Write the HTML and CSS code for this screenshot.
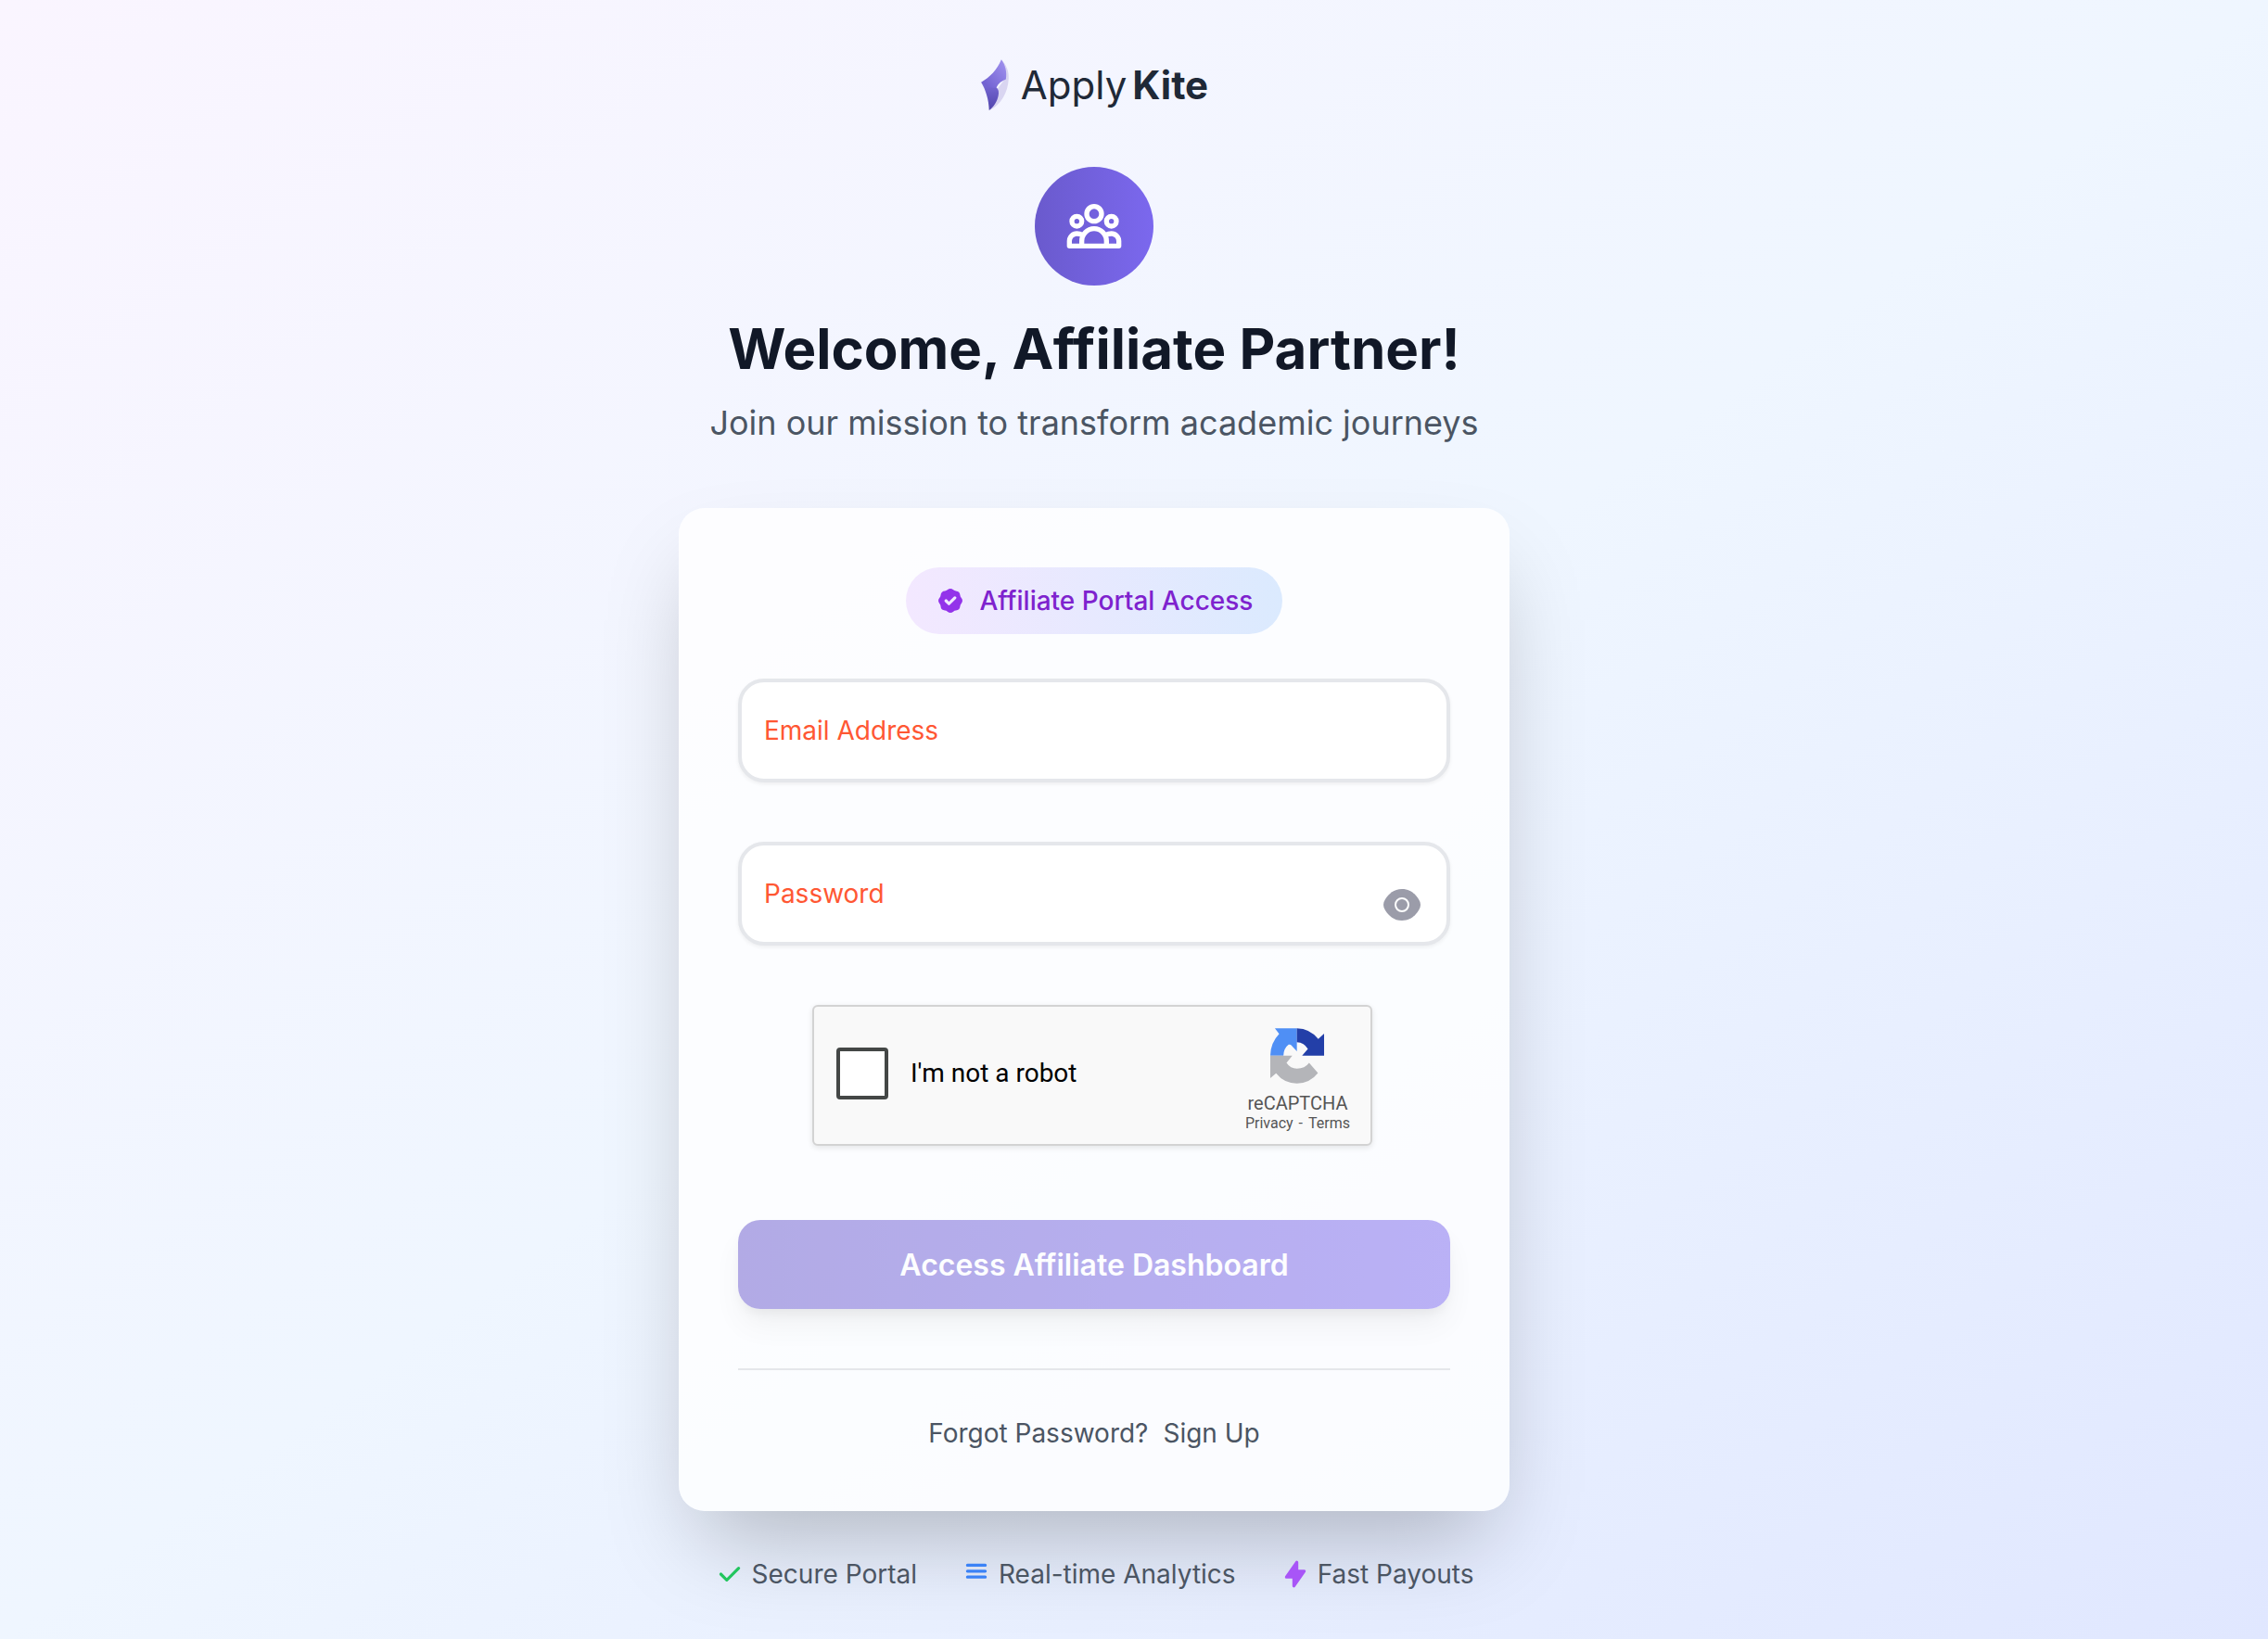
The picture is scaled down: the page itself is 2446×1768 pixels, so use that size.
FILE: index.html
```
<!DOCTYPE html>
<html lang="en">
<head>
    <meta charset="UTF-8">
    <meta name="viewport" content="width=device-width, initial-scale=1.0">
    <title>Apply Kite - Affiliate Portal</title>
    <link rel="stylesheet" href="styles.css">
</head>
<body>
    <main class="page">
        <header class="intro">
            <a class="logo" href="index.html">
                <svg class="logo-mark" viewBox="48 42 96 170" aria-hidden="true">
                    <defs>
                        <linearGradient id="kiteTop" x1="0" y1="1" x2="1" y2="0">
                            <stop offset="0" stop-color="#6a5acd"/>
                            <stop offset="1" stop-color="#a394f0"/>
                        </linearGradient>
                        <linearGradient id="kiteBottom" x1="0" y1="0" x2="0" y2="1">
                            <stop offset="0" stop-color="#7a6bd6"/>
                            <stop offset="1" stop-color="#5044ac"/>
                        </linearGradient>
                    </defs>
                    <path fill="#d9d5f1" d="M117 43C134 60 142 82 141 104C139 150 116 190 78 209L96 150L130 104Z"/>
                    <path fill="url(#kiteBottom)" d="M51 117L101 134C108 140 110 150 107 162C103 180 93 198 77 209C76 174 66 142 51 117Z"/>
                    <path fill="url(#kiteTop)" d="M117 43C130 60 136 84 132 107C119 112 107 120 101 134C84 138 66 132 51 117C79 101 103 77 117 43Z"/>
                </svg>
                <span class="logo-text"><span>Apply</span> <strong>Kite</strong></span>
            </a>

            <div class="avatar">
                <svg viewBox="0 0 192 192" aria-hidden="true">
                    <circle cx="96" cy="56" r="24"/>
                    <circle cx="40" cy="80" r="16"/>
                    <circle cx="152" cy="80" r="16"/>
                    <path d="M56 160v-16a40 40 0 0 1 80 0v16"/>
                    <path d="M58 124Q50 120 40 120a24 24 0 0 0-24 24v16h160v-16a24 24 0 0 0-24-24q-10 0-18 4"/>
                </svg>
            </div>

            <h1 class="title">Welcome, Affiliate Partner!</h1>
            <p class="subtitle">Join our mission to transform academic journeys</p>
        </header>

        <form class="card">
            <div class="badge">
                <svg viewBox="0 0 20 20" fill="currentColor" aria-hidden="true">
                    <path fill-rule="evenodd" clip-rule="evenodd" d="M6.267 3.455a3.066 3.066 0 001.745-.723 3.066 3.066 0 013.976 0 3.066 3.066 0 001.745.723 3.066 3.066 0 012.812 2.812c.051.643.304 1.254.723 1.745a3.066 3.066 0 010 3.976 3.066 3.066 0 00-.723 1.745 3.066 3.066 0 01-2.812 2.812 3.066 3.066 0 00-1.745.723 3.066 3.066 0 01-3.976 0 3.066 3.066 0 00-1.745-.723 3.066 3.066 0 01-2.812-2.812 3.066 3.066 0 00-.723-1.745 3.066 3.066 0 010-3.976 3.066 3.066 0 00.723-1.745 3.066 3.066 0 012.812-2.812zm7.44 5.252a1 1 0 00-1.414-1.414L9 10.586 7.707 9.293a1 1 0 00-1.414 1.414l2 2a1 1 0 001.414 0l4-4z"/>
                </svg>
                <span>Affiliate Portal Access</span>
            </div>

            <div class="field">
                <input type="email" id="email" autocomplete="off">
                <label for="email">Email Address</label>
            </div>

            <div class="field">
                <input type="password" id="password" autocomplete="off">
                <label for="password">Password</label>
                <button class="toggle" type="button" aria-label="Show password">
                    <svg viewBox="0 0 40 34" aria-hidden="true">
                        <path fill="#9b9ca9" d="M20 0C29 0 34 5 38 11Q42 17 38 23C34 29 29 34 20 34S6 29 2 23Q-2 17 2 11C6 5 11 0 20 0Z"/>
                        <circle cx="20" cy="17" r="7" fill="none" stroke="#fff" stroke-width="2"/>
                    </svg>
                </button>
            </div>

            <div class="captcha">
                <input type="checkbox" id="robot">
                <label for="robot">I'm not a robot</label>
                <div class="captcha-brand">
                    <svg viewBox="210 112 182 186" aria-hidden="true">
                        <path fill="#4f8ff5" d="M300 115H228L242 133Q214 162 213 204H256Q257 180 273 168Q279 166 283 172L300 190Z"/>
                        <path fill="#233fa8" d="M300 115Q343 116 370 150L389 132V204H317L336 182Q324 161 300 160Z"/>
                        <path fill="#b4b5b9" d="M213 204H285L266 228Q279 247 300 247Q326 247 340 228L369 261Q342 295 300 295Q258 295 232 262L213 278Z"/>
                    </svg>
                    <span class="captcha-name">reCAPTCHA</span>
                    <span class="captcha-links"><a href="#">Privacy</a><span>-</span><a href="#">Terms</a></span>
                </div>
            </div>

            <button class="submit" type="submit" disabled>Access Affiliate Dashboard</button>

            <div class="links">
                <a href="#">Forgot Password?</a>
                <a href="#">Sign Up</a>
            </div>
        </form>

        <ul class="features">
            <li>
                <svg class="green" viewBox="0 0 20 20" fill="currentColor" aria-hidden="true">
                    <path fill-rule="evenodd" d="M16.707 5.293a1 1 0 010 1.414l-8 8a1 1 0 01-1.414 0l-4-4a1 1 0 011.414-1.414L8 12.586l7.293-7.293a1 1 0 011.414 0z"/>
                </svg>
                <span>Secure Portal</span>
            </li>
            <li>
                <svg class="blue" viewBox="0 0 20 20" fill="currentColor" aria-hidden="true">
                    <path d="M4 3h12a1 1 0 010 2H4a1 1 0 010-2zM4 7h12a1 1 0 010 2H4a1 1 0 010-2zM4 11h12a1 1 0 010 2H4a1 1 0 010-2z"/>
                </svg>
                <span>Real-time Analytics</span>
            </li>
            <li>
                <svg class="purple" viewBox="0 0 20 20" fill="currentColor" aria-hidden="true">
                    <path fill-rule="evenodd" d="M11.3 1.046A1 1 0 0112 2v5h4a1 1 0 01.82 1.573l-7 10A1 1 0 018 18v-5H4a1 1 0 01-.82-1.573l7-10a1 1 0 011.12-.38z"/>
                </svg>
                <span>Fast Payouts</span>
            </li>
        </ul>
    </main>
</body>
</html>
```
FILE: styles.css
```
* {
    box-sizing: border-box;
}

body {
    margin: 0;
    min-height: 100vh;
    font-family: Inter, "Liberation Sans", sans-serif;
    font-size: 28px;
    line-height: 40px;
    color: #4b5563;
    background: linear-gradient(to bottom right, #faf5ff, #eff6ff, #e0e7ff);
}

a {
    color: inherit;
    text-decoration: none;
}

.page {
    display: flex;
    flex-direction: column;
    align-items: center;
    padding: 60px 86px 48px 0;
}

/* Header */
.intro {
    display: flex;
    flex-direction: column;
    align-items: center;
    text-align: center;
    margin-bottom: 64px;
}

.logo {
    display: flex;
    align-items: center;
    gap: 12px;
    height: 64px;
    margin-bottom: 56px;
}

.logo-mark {
    width: 32px;
    height: 56px;
}

.logo-text {
    display: flex;
    gap: 6px;
    font-size: 42px;
    font-weight: 400;
    color: #1f2937;
}

.logo-text strong {
    font-weight: 700;
}

.avatar {
    display: flex;
    align-items: center;
    justify-content: center;
    width: 128px;
    height: 128px;
    margin-bottom: 32px;
    border-radius: 50%;
    background: linear-gradient(to right, #6a5acd, #7b68ee);
}

.avatar svg {
    width: 64px;
    height: 64px;
    fill: none;
    stroke: #ffffff;
    stroke-width: 16;
    stroke-linejoin: round;
}

.title {
    margin: 0 0 16px;
    font-size: 60px;
    line-height: 72px;
    font-weight: 700;
    color: #111827;
}

.subtitle {
    margin: 0;
    font-size: 36px;
    line-height: 56px;
}

/* Card */
.card {
    display: flex;
    flex-direction: column;
    width: 100%;
    max-width: 896px;
    padding: 64px;
    border-radius: 28px;
    background-color: rgba(255, 255, 255, 0.8);
    box-shadow: 0 50px 100px -24px rgba(0, 0, 0, 0.25);
}

.badge {
    display: flex;
    align-self: center;
    align-items: center;
    gap: 16px;
    height: 72px;
    padding: 0 32px;
    margin-bottom: 48px;
    border-radius: 36px;
    font-weight: 500;
    color: #7e22ce;
    background: linear-gradient(to right, #f3e8ff, #dbeafe);
}

.badge svg {
    width: 32px;
    height: 32px;
    color: #9333ea;
}

.field {
    position: relative;
    margin-bottom: 64px;
}

.field input {
    display: block;
    width: 100%;
    height: 112px;
    padding: 0 24px;
    border: 4px solid #e5e7eb;
    border-radius: 28px;
    font: inherit;
    background-color: #ffffff;
    box-shadow: 0 2px 4px rgba(0, 0, 0, 0.06);
}

.field label {
    position: absolute;
    top: 36px;
    left: 28px;
    color: #ff5733;
}

.toggle {
    position: absolute;
    right: 32px;
    bottom: 27px;
    display: flex;
    padding: 0;
    border: 0;
    background: none;
}

.toggle svg {
    width: 40px;
    height: 34px;
}

/* Captcha */
.captcha {
    display: flex;
    align-items: center;
    align-self: center;
    width: 100%;
    max-width: 604px;
    height: 152px;
    padding: 0 22px 4px 24px;
    margin: 0 4px 80px 0;
    border: 2px solid #d3d3d3;
    border-radius: 6px;
    font-family: Roboto, "Liberation Sans", sans-serif;
    color: #000000;
    background-color: #f9f9f9;
    box-shadow: 0 2px 6px rgba(0, 0, 0, 0.1);
}

.captcha input {
    appearance: none;
    width: 56px;
    height: 56px;
    margin: 0 24px 0 0;
    border: 4px solid #444746;
    border-radius: 4px;
    background-color: #ffffff;
}

.captcha-brand {
    display: flex;
    flex-direction: column;
    align-items: center;
    margin-left: auto;
    padding-top: 14px;
    color: #555555;
}

.captcha-brand svg {
    width: 60px;
    height: 62px;
    margin-bottom: 8px;
}

.captcha-name {
    font-size: 20px;
    line-height: 24px;
}

.captcha-links {
    display: flex;
    gap: 6px;
    font-size: 16px;
    line-height: 20px;
}

/* Actions */
.submit {
    height: 96px;
    border: 0;
    border-radius: 24px;
    font-family: inherit;
    font-size: 32px;
    font-weight: 600;
    color: #ffffff;
    background: linear-gradient(to right, #6a5acd, #7b68ee);
    box-shadow: 0 20px 30px -6px rgba(0, 0, 0, 0.1), 0 8px 12px -4px rgba(0, 0, 0, 0.1);
    opacity: 0.5;
}

.links {
    display: flex;
    justify-content: center;
    gap: 16px;
    margin-top: 64px;
    padding-top: 48px;
    border-top: 2px solid #e5e7eb;
}

/* Footer */
.features {
    display: flex;
    justify-content: center;
    gap: 48px;
    margin: 48px 0 0;
    padding: 0;
    list-style: none;
}

.features li {
    display: flex;
    align-items: center;
    gap: 8px;
}

.features svg {
    width: 32px;
    height: 32px;
}

.green {
    color: #22c55e;
}

.blue {
    color: #3b82f6;
}

.purple {
    color: #a855f7;
}
```
